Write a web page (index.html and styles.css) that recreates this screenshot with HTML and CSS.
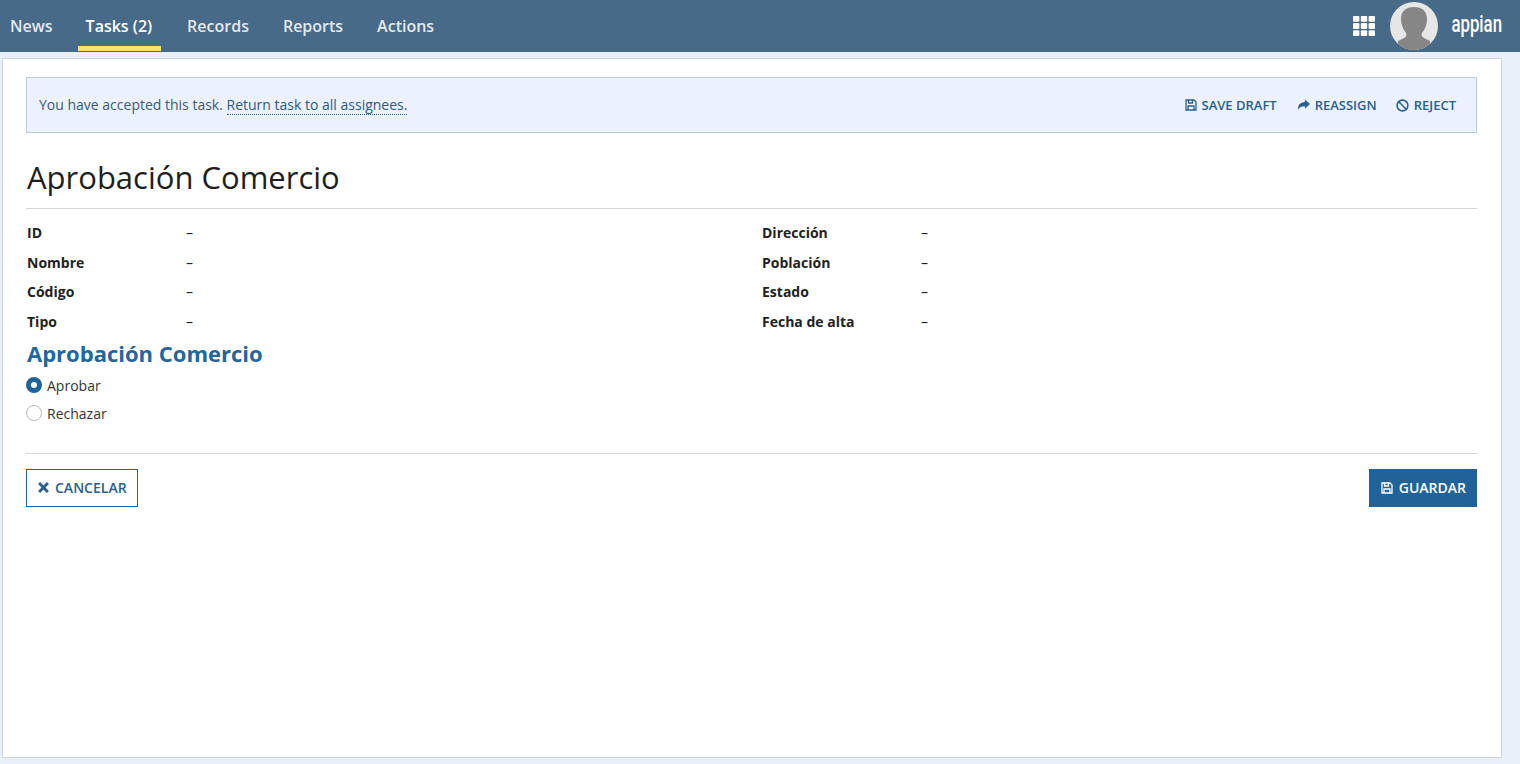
FILE: index.html
```html
<!DOCTYPE html>
<html lang="en">

<head>
    <meta charset="UTF-8">
    <meta name="viewport" content="width=device-width, initial-scale=1.0">
    <title>Aprobación Comercio</title>
    <link rel="stylesheet" href="styles.css">
</head>

<body>
    <header class="topbar">
        <nav class="tabs">
            <a class="tab">News</a>
            <a class="tab tab-active">Tasks (2)</a>
            <a class="tab">Records</a>
            <a class="tab">Reports</a>
            <a class="tab">Actions</a>
        </nav>
        <div class="topbar-right">
            <svg class="apps" width="22" height="20" viewBox="0 0 22 20" fill="#fff">
                <rect x="0" y="0" width="6.4" height="5.8" rx="1" />
                <rect x="7.8" y="0" width="6.4" height="5.8" rx="1" />
                <rect x="15.6" y="0" width="6.4" height="5.8" rx="1" />
                <rect x="0" y="7.1" width="6.4" height="5.8" rx="1" />
                <rect x="7.8" y="7.1" width="6.4" height="5.8" rx="1" />
                <rect x="15.6" y="7.1" width="6.4" height="5.8" rx="1" />
                <rect x="0" y="14.2" width="6.4" height="5.8" rx="1" />
                <rect x="7.8" y="14.2" width="6.4" height="5.8" rx="1" />
                <rect x="15.6" y="14.2" width="6.4" height="5.8" rx="1" />
            </svg>
            <svg class="avatar" width="48" height="48" viewBox="0 0 48 48">
                <defs>
                    <clipPath id="avatarClip">
                        <circle cx="24" cy="24" r="24" />
                    </clipPath>
                </defs>
                <circle cx="24" cy="24" r="24" fill="#e6e6e6" />
                <path clip-path="url(#avatarClip)" fill="#868686"
                    d="M24 5c-8 0-13 4-13 12 0 6 2 10 5 14 1 2 0 4-2 5-2 1-4 2-6 3l-1 9h34l-1-9c-2-1-4-2-6-3-2-1-3-3-2-5 3-4 5-8 5-14 0-8-5-12-13-12z" />
            </svg>
            <span class="logo">appian</span>
        </div>
    </header>

    <main class="card">
        <div class="banner">
            <p class="banner-text">You have accepted this task. <a class="banner-link">Return task to all assignees.</a></p>
            <div class="banner-actions">
                <a class="action">
                    <svg class="ico" width="12" height="12" viewBox="0 0 12 12" fill="none" stroke="currentColor" stroke-width="1.3">
                        <path d="M1 1h8l2 2v8H1z" />
                        <path d="M3.5 1v3h4V1M3 11V7h6v4" />
                    </svg>
                    SAVE DRAFT
                </a>
                <a class="action">
                    <svg class="ico" width="13" height="12" viewBox="0 0 14 12" fill="currentColor">
                        <path d="M8.5 0 14 5 8.5 10V7.3C5 7.3 2.5 8 1 11.5 0.6 6.5 3.5 3 8.5 2.8z" />
                    </svg>
                    REASSIGN
                </a>
                <a class="action">
                    <svg class="ico" width="13" height="13" viewBox="0 0 13 13" fill="none" stroke="currentColor" stroke-width="1.6">
                        <circle cx="6.5" cy="6.5" r="5.4" />
                        <path d="M2.8 2.8l7.4 7.4" />
                    </svg>
                    REJECT
                </a>
            </div>
        </div>

        <h1 class="title">Aprobación Comercio</h1>

        <div class="fields">
            <div class="field-col">
                <div class="field"><span class="label">ID</span><span>–</span></div>
                <div class="field"><span class="label">Nombre</span><span>–</span></div>
                <div class="field"><span class="label">Código</span><span>–</span></div>
                <div class="field"><span class="label">Tipo</span><span>–</span></div>
            </div>
            <div class="field-col">
                <div class="field"><span class="label">Dirección</span><span>–</span></div>
                <div class="field"><span class="label">Población</span><span>–</span></div>
                <div class="field"><span class="label">Estado</span><span>–</span></div>
                <div class="field"><span class="label">Fecha de alta</span><span>–</span></div>
            </div>
        </div>

        <h2 class="subtitle">Aprobación Comercio</h2>

        <div class="radios">
            <label class="radio"><span class="dot dot-on"></span>Aprobar</label>
            <label class="radio"><span class="dot"></span>Rechazar</label>
        </div>

        <div class="buttons">
            <button class="but but-cancel">
                <svg class="ico" width="11" height="11" viewBox="0 0 10 10" stroke="currentColor" stroke-width="2.6">
                    <path d="M1 1l8 8M9 1l-8 8" />
                </svg>
                CANCELAR
            </button>
            <button class="but but-save">
                <svg class="ico" width="12" height="12" viewBox="0 0 12 12" fill="none" stroke="currentColor" stroke-width="1.3">
                    <path d="M1 1h8l2 2v8H1z" />
                    <path d="M3.5 1v3h4V1M3 11V7h6v4" />
                </svg>
                GUARDAR
            </button>
        </div>
    </main>
</body>

</html>
```

FILE: styles.css
```css
* {
    box-sizing: border-box;
}

html,
body {
    height: 100%;
}

body {
    margin: 0;
    background-color: #e9f0f9;
    font-family: 'Open Sans', sans-serif;
    font-size: 14px;
    color: #222;
    overflow: hidden;
}

.topbar {
    display: flex;
    justify-content: space-between;
    align-items: center;
    height: 52px;
    background-color: #466a88;
    padding-right: 18px;
}

.tabs {
    display: flex;
    height: 100%;
}

.tab {
    display: flex;
    align-items: center;
    height: 51px;
    padding: 6px 8px 0;
    margin-right: 18px;
    font-size: 16px;
    font-weight: 600;
    color: #e3e9ef;
    border-bottom: 5px solid transparent;
}

.tab-active {
    padding-right: 9px;
    color: #fff;
    border-bottom-color: #f6e75e;
}

.tab:first-child {
    padding-left: 10px;
    margin-right: 17px;
}

.topbar-right {
    display: flex;
    align-items: center;
}

.apps {
    margin-right: 15px;
}

.avatar {
    margin-right: 14px;
}

.logo {
    display: flex;
    justify-content: flex-end;
    width: 50px;
    margin-bottom: 3px;
    font-family: 'Roboto', sans-serif;
    font-size: 23px;
    font-weight: 500;
    color: #fff;
    white-space: nowrap;
    transform: scaleX(0.73);
    transform-origin: right center;
}

.card {
    width: 1500px;
    height: 700px;
    margin: 6px 0 0 2px;
    background-color: #fff;
    border: 1px solid #cfd4dc;
    padding: 18px 24px 0 23px;
}

.banner {
    display: flex;
    justify-content: space-between;
    align-items: center;
    height: 56px;
    background-color: #ebf2fd;
    border: 1px solid #b9cde0;
    padding: 0 20px 0 12px;
}

.banner-text {
    margin: 0 0 2px;
    color: #3e5a7a;
    font-size: 14px;
}

.banner-link {
    border-bottom: 1px dotted #1d5f8f;
    color: #2b5a82;
}

.banner-actions {
    display: flex;
    gap: 20px;
}

.action {
    display: flex;
    align-items: center;
    gap: 5px;
    font-size: 13px;
    font-weight: 600;
    color: #2a5f8e;
}

.action:last-child {
    margin-left: -1px;
}

.ico {
    flex-shrink: 0;
}

.title {
    margin: 0;
    padding: 24px 0 10px 1px;
    font-size: 31px;
    line-height: 41px;
    font-weight: 500;
    color: #1e1e1e;
    border-bottom: 1px solid #d5d5d5;
}

.fields {
    display: flex;
    gap: 20px;
    margin-top: 9px;
    padding-left: 1px;
}

.field-col {
    width: 715px;
}

.field {
    display: flex;
    align-items: center;
    height: 29.6px;
    font-size: 14px;
    color: #222;
}

.label {
    width: 159px;
    font-weight: 700;
}

.subtitle {
    margin: 2px 0 0;
    padding-left: 1px;
    font-size: 22px;
    line-height: 30px;
    font-weight: 700;
    color: #23669b;
}

.radios {
    display: flex;
    flex-direction: column;
    gap: 8px;
    margin-top: 7px;
    padding-bottom: 30px;
    border-bottom: 1px solid #d5d5d5;
}

.radio {
    display: flex;
    align-items: center;
    gap: 5px;
    height: 20px;
    font-size: 14px;
    color: #333;
}

.dot {
    width: 16px;
    height: 16px;
    border-radius: 50%;
    border: 1px solid #b9b9b9;
    background-color: #fff;
}

.dot-on {
    border: 5.5px solid #1f6399;
}

.buttons {
    display: flex;
    justify-content: space-between;
    margin-top: 15px;
}

.but {
    display: flex;
    align-items: center;
    gap: 6px;
    height: 38px;
    padding: 0 10px 1px 11px;
    font-family: 'Open Sans', sans-serif;
    font-size: 14px;
    font-weight: 600;
    border: 1px solid #1f6399;
    border-radius: 0;
}

.but-cancel {
    background-color: #fff;
    color: #2a5f8e;
}

.but-save {
    background-color: #1f6399;
    color: #fff;
}
```
